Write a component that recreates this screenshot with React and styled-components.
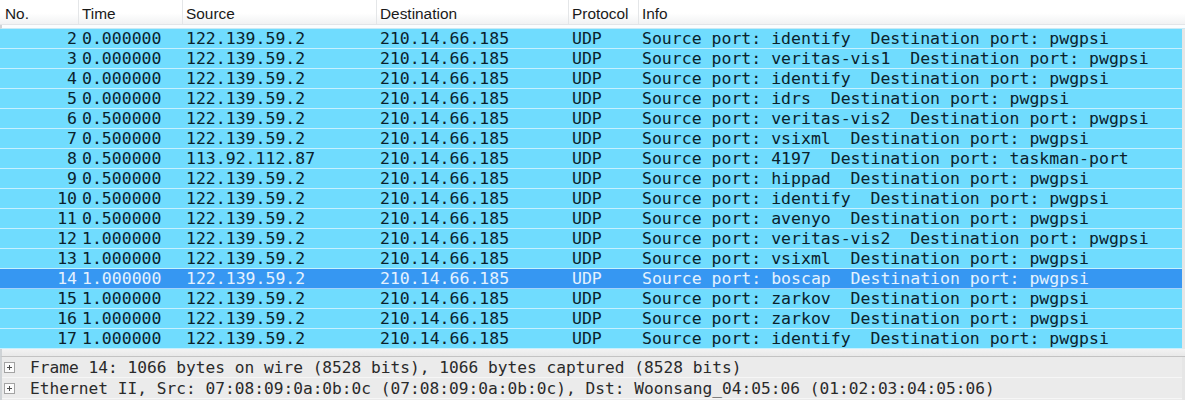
import React from 'react';
import styled, { createGlobalStyle } from 'styled-components';

const GlobalStyle = createGlobalStyle`
  html, body {
    margin: 0;
    padding: 0;
    background: #ffffff;
    overflow: hidden;
  }
`;

const COLS = '78px 104px 194px 192px 70px 1fr';

const Window = styled.div`
  width: 1185px;
  height: 400px;
  display: flex;
  flex-direction: column;
  background: #ffffff;
  overflow: hidden;
`;

const Header = styled.div`
  display: grid;
  grid-template-columns: ${COLS};
  height: 25px;
  background: linear-gradient(#ffffff 0%, #ffffff 55%, #f1f2f3 100%);
  border-bottom: 1px solid #e2e5e8;
  box-sizing: border-box;
  font-family: "Liberation Sans", Arial, sans-serif;
  font-size: 15.4px;
  color: #1a1a1a;
`;

const HeadCell = styled.div`
  padding: 3px 0 0 ${p => (p.$first ? 5 : 3)}px;
  line-height: 22px;
  border-left: ${p => (p.$first ? 'none' : '1px solid #e4e6e8')};
  white-space: nowrap;
  overflow: hidden;
`;

const Gap = styled.div`
  height: 3px;
  background: #fbfdfe;
  border-bottom: 1px solid #c9e9f4;
  border-left: 2px solid #cfd3d6;
`;

const List = styled.div`
  display: flex;
  flex-direction: column;
  border-left: 2px solid #c4cbcf;
  border-right: 3px solid #e6e6e6;
`;

const Row = styled.div`
  display: grid;
  grid-template-columns: ${COLS};
  height: 20px;
  box-sizing: border-box;
  border-bottom: 1px solid ${p => (p.$selected ? '#a6d2fb' : '#c6f0ff')};
  background: ${p => (p.$selected ? '#3697f2' : '#70dcfe')};
  color: ${p => (p.$selected ? '#e4f2ff' : '#0a222c')};
  font-family: "DejaVu Sans Mono", "Liberation Mono", monospace;
  font-size: 16.5px;
  line-height: 19px;
  margin-left: -2px;
`;

const Cell = styled.div`
  padding: 0 ${p => (p.$right ? '1px' : '0')} 0 ${p => (p.$right ? '0' : '4px')};
  text-align: ${p => (p.$right ? 'right' : 'left')};
  white-space: pre;
  overflow: hidden;
`;

const Spacer = styled.div`
  height: 7px;
  background: linear-gradient(#f2f2f2, #e9e9e9);
  border-left: 2px solid #cfd3d6;
  border-bottom: 1px solid #c3c3c3;
`;

const Details = styled.div`
  flex: 1;
  display: flex;
  flex-direction: column;
  background: #ebebeb;
  border-left: 2px solid #cfd3d6;
  border-right: 3px solid #e6e6e6;
`;

const DetailRow = styled.div`
  display: flex;
  align-items: center;
  gap: 15px;
  height: 21px;
  box-sizing: border-box;
  padding: 1px 0 0 2px;
  border-bottom: 1px solid #f6f6f6;
  font-family: "DejaVu Sans Mono", "Liberation Mono", monospace;
  font-size: 16.2px;
  color: #2a2a2a;
  white-space: pre;
`;

const PlusBox = () => (
  <svg width="11" height="11" viewBox="0 0 11 11">
    <rect x="0.5" y="0.5" width="10" height="10" fill="#fbfbfb" stroke="#a3a3a3" />
    <path d="M3 5.5h5M5.5 3v5" stroke="#4d4d4d" strokeWidth="1" />
  </svg>
);

const rows = [
  [2, '0.000000', '122.139.59.2', 'identify'],
  [3, '0.000000', '122.139.59.2', 'veritas-vis1'],
  [4, '0.000000', '122.139.59.2', 'identify'],
  [5, '0.000000', '122.139.59.2', 'idrs'],
  [6, '0.500000', '122.139.59.2', 'veritas-vis2'],
  [7, '0.500000', '122.139.59.2', 'vsixml'],
  [8, '0.500000', '113.92.112.87', '4197', 'taskman-port'],
  [9, '0.500000', '122.139.59.2', 'hippad'],
  [10, '0.500000', '122.139.59.2', 'identify'],
  [11, '0.500000', '122.139.59.2', 'avenyo'],
  [12, '1.000000', '122.139.59.2', 'veritas-vis2'],
  [13, '1.000000', '122.139.59.2', 'vsixml'],
  [14, '1.000000', '122.139.59.2', 'boscap'],
  [15, '1.000000', '122.139.59.2', 'zarkov'],
  [16, '1.000000', '122.139.59.2', 'zarkov'],
  [17, '1.000000', '122.139.59.2', 'identify'],
];

export default function App() {
  return (
    <Window>
      <GlobalStyle />
      <Header>
        <HeadCell $first>No.</HeadCell>
        <HeadCell>Time</HeadCell>
        <HeadCell>Source</HeadCell>
        <HeadCell>Destination</HeadCell>
        <HeadCell>Protocol</HeadCell>
        <HeadCell>Info</HeadCell>
      </Header>
      <Gap />
      <List>
        {rows.map(([no, time, src, sport, dport = 'pwgpsi']) => (
          <Row key={no} $selected={no === 14}>
            <Cell $right>{no}</Cell>
            <Cell>{time}</Cell>
            <Cell>{src}</Cell>
            <Cell>210.14.66.185</Cell>
            <Cell>UDP</Cell>
            <Cell>{`Source port: ${sport}  Destination port: ${dport}`}</Cell>
          </Row>
        ))}
      </List>
      <Spacer />
      <Details>
        <DetailRow>
          <PlusBox />
          <span>Frame 14: 1066 bytes on wire (8528 bits), 1066 bytes captured (8528 bits)</span>
        </DetailRow>
        <DetailRow>
          <PlusBox />
          <span>Ethernet II, Src: 07:08:09:0a:0b:0c (07:08:09:0a:0b:0c), Dst: Woonsang_04:05:06 (01:02:03:04:05:06)</span>
        </DetailRow>
      </Details>
    </Window>
  );
}
